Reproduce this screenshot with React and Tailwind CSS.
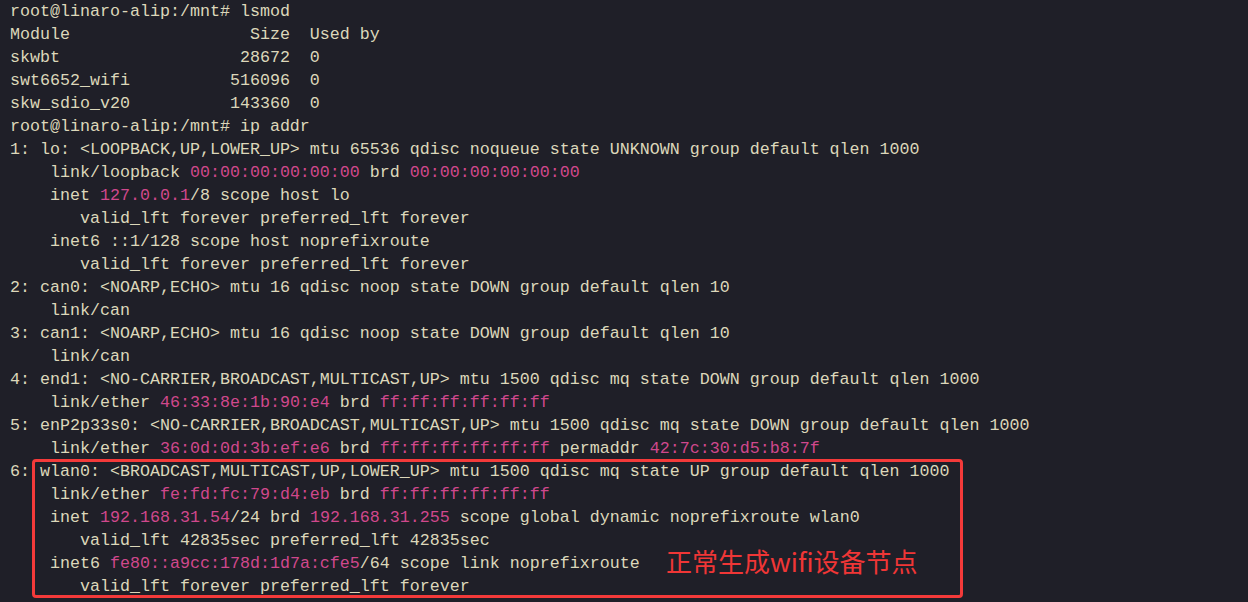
const P = "text-[#d0488c]";

// each line: array of [text, pink?]
const lines = [
  [["root@linaro-alip:/mnt# lsmod"]],
  [["Module                  Size  Used by"]],
  [["skwbt                  28672  0"]],
  [["swt6652_wifi          516096  0"]],
  [["skw_sdio_v20          143360  0"]],
  [["root@linaro-alip:/mnt# ip addr"]],
  [["1: lo: <LOOPBACK,UP,LOWER_UP> mtu 65536 qdisc noqueue state UNKNOWN group default qlen 1000"]],
  [["    link/loopback "], ["00:00:00:00:00:00", 1], [" brd "], ["00:00:00:00:00:00", 1]],
  [["    inet "], ["127.0.0.1", 1], ["/8 scope host lo"]],
  [["       valid_lft forever preferred_lft forever"]],
  [["    inet6 ::1/128 scope host noprefixroute"]],
  [["       valid_lft forever preferred_lft forever"]],
  [["2: can0: <NOARP,ECHO> mtu 16 qdisc noop state DOWN group default qlen 10"]],
  [["    link/can"]],
  [["3: can1: <NOARP,ECHO> mtu 16 qdisc noop state DOWN group default qlen 10"]],
  [["    link/can"]],
  [["4: end1: <NO-CARRIER,BROADCAST,MULTICAST,UP> mtu 1500 qdisc mq state DOWN group default qlen 1000"]],
  [["    link/ether "], ["46:33:8e:1b:90:e4", 1], [" brd "], ["ff:ff:ff:ff:ff:ff", 1]],
  [["5: enP2p33s0: <NO-CARRIER,BROADCAST,MULTICAST,UP> mtu 1500 qdisc mq state DOWN group default qlen 1000"]],
  [["    link/ether "], ["36:0d:0d:3b:ef:e6", 1], [" brd "], ["ff:ff:ff:ff:ff:ff", 1], [" permaddr "], ["42:7c:30:d5:b8:7f", 1]],
  [["6: wlan0: <BROADCAST,MULTICAST,UP,LOWER_UP> mtu 1500 qdisc mq state UP group default qlen 1000"]],
  [["    link/ether "], ["fe:fd:fc:79:d4:eb", 1], [" brd "], ["ff:ff:ff:ff:ff:ff", 1]],
  [["    inet "], ["192.168.31.54", 1], ["/24 brd "], ["192.168.31.255", 1], [" scope global dynamic noprefixroute wlan0"]],
  [["       valid_lft 42835sec preferred_lft 42835sec"]],
  [["    inet6 "], ["fe80::a9cc:178d:1d7a:cfe5", 1], ["/64 scope link noprefixroute"]],
  [["       valid_lft forever preferred_lft forever"]],
];

export default function App() {
  return (
    <div className="relative w-[1248px] h-[602px] overflow-hidden bg-[#1f1f28]">
      {/* Terminal output */}
      <div className="pl-[10px] font-['Liberation_Mono',monospace] text-[16.6667px] leading-[23px] text-[#dcd7ba] whitespace-pre">
        {lines.map((segs, i) => (
          <div key={i} className="h-[23px]">
            {segs.map(([t, pink], j) => (
              <span key={j} className={pink ? P : undefined}>
                {t}
              </span>
            ))}
          </div>
        ))}
      </div>

      {/* Annotation box */}
      <div className="absolute left-[32px] top-[459px] w-[931px] h-[139px] rounded-[4px] border-[3px] border-[#f43a3a]" />
      <div className="absolute left-[666px] top-[543px] font-['Noto_Sans_CJK_SC',sans-serif] text-[26px] leading-[36px] text-[#f03636] whitespace-nowrap">
        正常生成wifi设备节点
      </div>
    </div>
  );
}
